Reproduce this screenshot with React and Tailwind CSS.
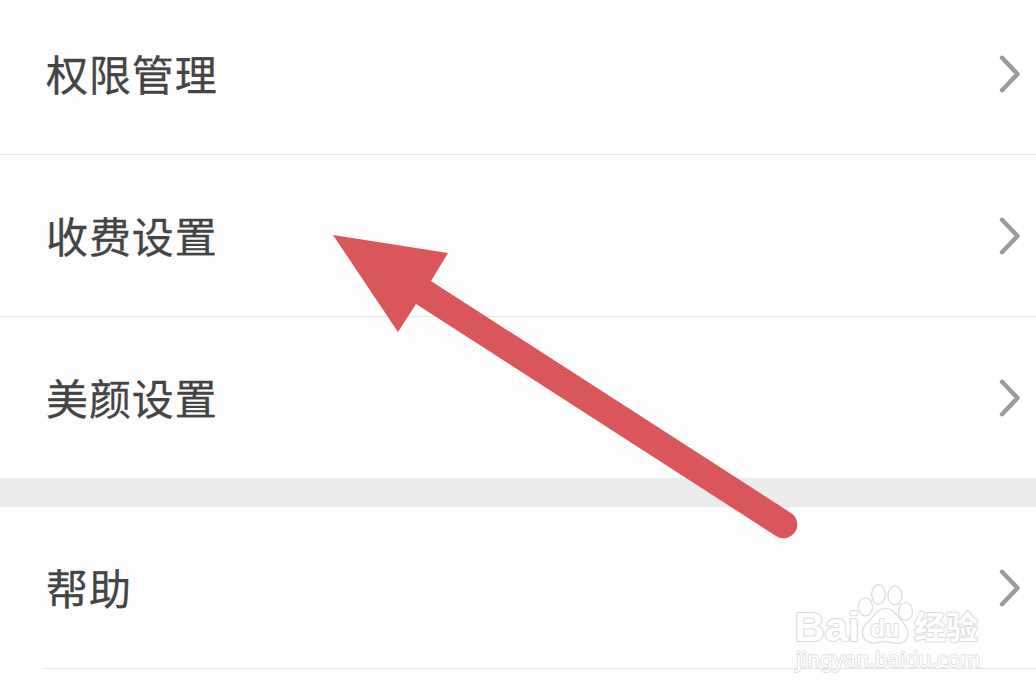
const groups = [
  ["权限管理", "收费设置", "美颜设置"],
  ["帮助"],
];

const Chevron = () => (
  <svg width="24" height="42" viewBox="0 0 24 42" fill="none" className="shrink-0">
    <path
      d="M4 4.8L19.5 21L4 37.2"
      stroke="#9b9b9b"
      strokeWidth="4.4"
      strokeLinecap="round"
      strokeLinejoin="round"
    />
  </svg>
);

const Row = ({ label, divider }) => (
  <div>
    <div className="flex h-[161px] items-center justify-between pl-[46px] pr-[14px]">
      <span className="pb-px text-[42px] leading-[60px] tracking-[0.9px] text-[#444444] [-webkit-text-stroke:0.3px_#444444]">
        {label}
      </span>
      <Chevron />
    </div>
    <div className={divider} />
  </div>
);

const Arrow = () => (
  <svg
    className="absolute left-0 top-0"
    width="1036"
    height="696"
    viewBox="0 0 1036 696"
    fill="#db565b"
  >
    <path d="M333 235L448 253L431 281L791 513A13.3 13.3 0 0 1 776 536L416 304L398 332Z" />
  </svg>
);

const Watermark = () => (
  <svg
    className="absolute left-[780px] top-[570px]"
    width="256"
    height="126"
    viewBox="0 0 256 126"
    fill="#ffffff"
    stroke="#dcdcdc"
    strokeWidth="1.2"
    strokeLinejoin="round"
    fontFamily="'Liberation Sans', sans-serif"
  >
    <text x="14.5" y="71" fontSize="40" fontWeight="700" textLength="65" lengthAdjust="spacingAndGlyphs" strokeWidth="2" paintOrder="stroke">
      Bai
    </text>
    <text
      x="134"
      y="69"
      fontSize="32"
      fontWeight="700"
      textLength="64"
      lengthAdjust="spacingAndGlyphs"
      strokeWidth="2"
      paintOrder="stroke"
      fontFamily="'Noto Sans CJK SC', sans-serif"
    >
      经验
    </text>
    {/* paw */}
    <ellipse cx="85.5" cy="37" rx="7" ry="9" />
    <ellipse cx="98.5" cy="24.5" rx="6.8" ry="9.8" />
    <ellipse cx="115" cy="25.5" rx="7" ry="9.3" />
    <ellipse cx="125.5" cy="41.5" rx="7" ry="9" />
    <path d="M105 38.5C98 38.5 95 44 92 48C88 52 82 56 82.5 63C83 70 88 73.5 94 73C99 72.5 101 71.5 105 71.5C109 71.5 112 73.5 117 73.5C124 73.5 128 69 128 63C128 56 122 52 119 48C115 43 112 38.5 105 38.5Z" />
    <text x="90.5" y="66.5" fontSize="23" fontWeight="700" textLength="29" lengthAdjust="spacingAndGlyphs" strokeWidth="1.8" paintOrder="stroke">
      du
    </text>
    <text
      x="16"
      y="96.5"
      fontSize="21"
      textLength="184"
      lengthAdjust="spacingAndGlyphs"
      strokeWidth="1.6"
      paintOrder="stroke"
      fontFamily="'Noto Sans', sans-serif"
    >
      jingyan.baidu.com
    </text>
  </svg>
);

const App = () => {
  return (
    <div className="relative h-[696px] w-[1036px] overflow-hidden bg-[#fefefe] font-['Noto_Sans_CJK_SC',sans-serif]">
      <div className="-mt-[7px]">
        {groups[0].map((label, i) => (
          <Row key={label} label={label} divider={i < 2 ? "h-px bg-[#e6e6e6]" : "h-0"} />
        ))}
      </div>
      <div className="h-[29px] bg-[#ececec]" />
      {groups[1].map((label) => (
        <Row key={label} label={label} divider="ml-[44px] h-px bg-[#e6e6e6]" />
      ))}
      <Watermark />
      <Arrow />
    </div>
  );
};
export default App;
